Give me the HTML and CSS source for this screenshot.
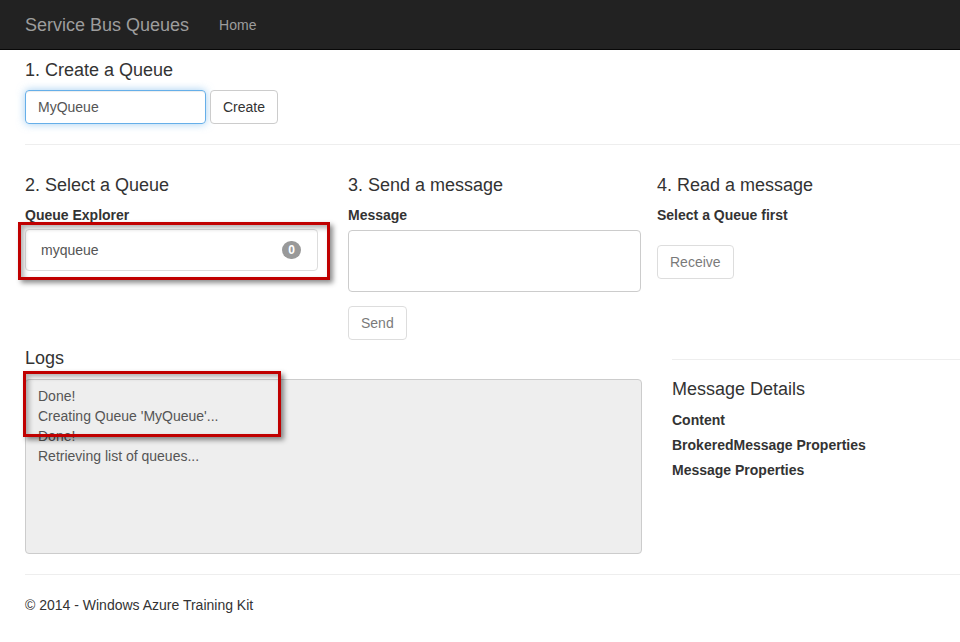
FILE: index.html
```html
<!DOCTYPE html>
<html>
<head>
<meta charset="utf-8">
<title>Service Bus Queues</title>
<link rel="stylesheet" href="styles.css">
</head>
<body>
<header class="navbar">
  <span class="brand">Service Bus Queues</span>
  <span class="nav-link">Home</span>
</header>
<main class="container">
  <h4 class="title title-create">1. Create a Queue</h4>
  <div class="create-row">
    <div class="input focus">MyQueue</div>
    <button class="btn">Create</button>
  </div>
  <hr class="rule top-rule">
  <div class="steps">
    <section class="col col-a">
      <h4 class="title">2. Select a Queue</h4>
      <div class="label">Queue Explorer</div>
      <div class="list-item"><span>myqueue</span><span class="badge">0</span></div>
    </section>
    <section class="col col-b">
      <h4 class="title">3. Send a message</h4>
      <div class="label">Message</div>
      <div class="textarea"></div>
      <button class="btn disabled send">Send</button>
    </section>
    <section class="col col-c">
      <h4 class="title">4. Read a message</h4>
      <div class="label">Select a Queue first</div>
      <button class="btn disabled receive">Receive</button>
    </section>
  </div>
  <div class="bottom">
    <section class="logs">
      <h4 class="title logs-title">Logs</h4>
      <div class="log-box">
        <div>Done!</div>
        <div>Creating Queue 'MyQueue'...</div>
        <div>Done!</div>
        <div>Retrieving list of queues...</div>
      </div>
    </section>
    <section class="details">
      <hr class="rule details-rule">
      <h4 class="title">Message Details</h4>
      <div class="label detail-item">Content</div>
      <div class="label detail-item">BrokeredMessage Properties</div>
      <div class="label detail-item">Message Properties</div>
    </section>
  </div>
  <hr class="rule footer-rule">
  <footer class="footer">© 2014 - Windows Azure Training Kit</footer>
</main>
<div class="annot annot-1"></div>
<div class="annot annot-2"></div>
</body>
</html>
```
FILE: styles.css
```css
* { box-sizing: border-box; }
html, body { margin: 0; padding: 0; }
body {
  font-family: "Liberation Sans", Arial, Helvetica, sans-serif;
  font-size: 14px;
  line-height: 20px;
  color: #333;
  background: #fff;
  width: 960px;
  overflow: hidden;
  position: relative;
}
.navbar {
  height: 50px;
  background: #222;
  border-bottom: 1px solid #080808;
  display: flex;
  align-items: center;
  padding-left: 25px;
}
.brand { font-size: 18px; line-height: 20px; color: #9d9d9d; }
.nav-link { font-size: 14px; color: #9d9d9d; margin-left: 30px; }
.container { padding-left: 25px; }
.title {
  font-size: 18px;
  font-weight: normal;
  line-height: 20px;
  margin: 10px 0 10px;
  color: #333;
}
.create-row { display: flex; gap: 4px; }
.input {
  width: 181px;
  height: 34px;
  padding: 6px 12px;
  border: 1px solid #ccc;
  border-radius: 4px;
  color: #555;
}
.input.focus {
  border-color: #66afe9;
  box-shadow: inset 0 1px 1px rgba(0,0,0,.075), 0 0 8px rgba(102,175,233,.6);
}
.btn {
  font-family: inherit;
  font-size: 14px;
  line-height: 20px;
  height: 34px;
  padding: 6px 12px;
  border: 1px solid #ccc;
  border-radius: 4px;
  background: #fff;
  color: #333;
}
.btn.disabled { opacity: .65; }
.rule { border: 0; border-top: 1px solid #eee; margin: 20px 0 20px; }
.steps { display: flex; }
.col-a { width: 293px; margin-right: 30px; }
.col-b { width: 293px; margin-right: 16px; }
.col-c { flex: 1; }
.label { font-weight: bold; margin-bottom: 5px; }
.col-a .label { margin-bottom: 4px; }
.list-item {
  height: 42px;
  padding: 10px 15px;
  border: 1px solid #ddd;
  border-radius: 4px;
  display: flex;
  justify-content: space-between;
  align-items: center;
  color: #555;
}
.badge {
  background: #999;
  color: #fff;
  font-size: 12px;
  font-weight: bold;
  line-height: 12px;
  padding: 3px 6px;
  border-radius: 10px;
  margin-right: 1px;
}
.textarea {
  height: 62px;
  border: 1px solid #ccc;
  border-radius: 4px;
}
.send { display: block; margin-top: 14px; }
.receive { margin-top: 15px; }
.bottom { display: flex; }
.logs { width: 617px; }
.logs-title { margin: 8px 0 11px; }
.log-box {
  height: 175px;
  background: #eee;
  border: 1px solid #ccc;
  border-radius: 4px;
  padding: 6px 12px;
  color: #555;
}
.details { flex: 1; margin-left: 30px; }
.details-rule { margin: 19px 0 19px; }
.detail-item { margin: 0 0 5px; }
.details .title { margin-bottom: 11px; }
.footer-rule { margin: 20px 0 20px; }
.footer { line-height: 20px; }
.annot {
  position: absolute;
  border: 3px solid #c00000;
  box-shadow: 3px 3px 5px rgba(0,0,0,.45), inset 3px 3px 5px rgba(0,0,0,.3);
}
.annot-1 { left: 18px; top: 222px; width: 312px; height: 58px; }
.annot-2 { left: 23px; top: 371px; width: 258px; height: 66px; }
```
